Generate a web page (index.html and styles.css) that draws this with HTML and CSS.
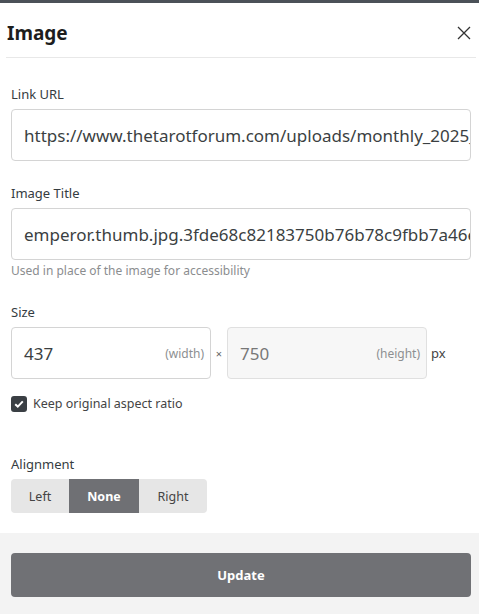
FILE: index.html
```html
<!DOCTYPE html>
<html>
<head>
<meta charset="utf-8">
<link rel="stylesheet" href="styles.css">
</head>
<body>
<div class="topbar"></div>
<div class="header">
  <h1 class="title">Image</h1>
  <svg class="close" width="14" height="14" viewBox="0 0 14 14"><path d="M1 1L13 13M13 1L1 13" stroke="#333" stroke-width="1.3" fill="none"/></svg>
</div>
<div class="content">
  <div class="field first">
    <label class="label">Link URL</label>
    <div class="input"><span class="value">https://www.thetarotforum.com/uploads/monthly_2025_01/emperor.jpg</span></div>
  </div>
  <div class="field">
    <label class="label">Image Title</label>
    <div class="input"><span class="value">emperor.thumb.jpg.3fde68c82183750b76b78c9fbb7a46e1.jpg</span></div>
    <div class="hint">Used in place of the image for accessibility</div>
  </div>
  <div class="field size-field">
    <label class="label">Size</label>
    <div class="size-row">
      <div class="input small"><span class="value">437</span><span class="unit">(width)</span></div>
      <span class="times">×</span>
      <div class="input small disabled"><span class="value">750</span><span class="unit">(height)</span></div>
      <span class="px">px</span>
    </div>
    <div class="check-row">
      <span class="checkbox"><svg width="10" height="8" viewBox="0 0 10 8"><path d="M1.2 4.2L3.8 6.6L8.8 1.4" stroke="#fff" stroke-width="2" fill="none"/></svg></span>
      <span class="check-label">Keep original aspect ratio</span>
    </div>
  </div>
  <div class="field align-field">
    <label class="label">Alignment</label>
    <div class="seg">
      <span class="seg-btn left">Left</span>
      <span class="seg-btn none active">None</span>
      <span class="seg-btn right">Right</span>
    </div>
  </div>
</div>
<div class="footer">
  <div class="update">Update</div>
</div>
</body>
</html>
```
FILE: styles.css
```css
* { box-sizing: border-box; }
html, body { margin: 0; padding: 0; background: #fff; }
body {
  font-family: "Noto Sans", "Open Sans", "Liberation Sans", sans-serif;
  color: #353c41;
  width: 479px;
  height: 614px;
  overflow: hidden;
  display: flex;
  flex-direction: column;
}
.topbar { height: 3px; background: #4b5158; flex: none; }
.header {
  height: 55px;
  margin: 0 3px 0 6px;
  border-bottom: 1px solid #e8e8e8;
  display: flex;
  align-items: center;
  justify-content: space-between;
  padding: 6px 5px 0 1px;
  flex: none;
}
.title {
  margin: 0;
  font-size: 19px;
  font-weight: 700;
  color: #1d1d1d;
  line-height: 24px;
}
.close { display: block; }
.content { padding: 0 8px 0 11px; flex: 1; }
.field { margin-top: 23px; }
.field.first { margin-top: 27px; }
.field.size-field { margin-top: 24px; }
.field.align-field { margin-top: 43px; }
.label {
  display: block;
  font-size: 13px;
  line-height: 18px;
  color: #353c41;
  margin-bottom: 6px;
}
.input {
  height: 52px;
  border: 1px solid #d4d4d4;
  border-radius: 4px;
  background: #fff;
  display: flex;
  align-items: center;
  padding: 0 0 0 12px;
  overflow: hidden;
  white-space: nowrap;
}
.value {
  font-size: 17px;
  color: #3b3f42;
}
.hint {
  font-size: 12px;
  line-height: 16px;
  color: #8b8d8f;
  margin-top: 3px;
}
.size-row { display: flex; align-items: center; }
.input.small {
  width: 200px;
  justify-content: space-between;
  padding-right: 6px;
  flex: none;
}
.input.disabled { background: #f7f7f7; border-color: #e0e0e0; }
.input.disabled .value { color: #777; }
.unit { font-size: 12px; color: #8d8f91; }
.times { width: 16px; text-align: center; font-size: 11px; color: #666; }
.px { margin-left: 4px; font-size: 13px; color: #444; }
.check-row { display: flex; align-items: center; margin-top: 17px; }
.checkbox {
  width: 16px;
  height: 16px;
  border-radius: 3px;
  background: #3a3f44;
  display: flex;
  align-items: center;
  justify-content: center;
  flex: none;
}
.check-label { margin-left: 6px; font-size: 12.5px; color: #444; line-height: 16px; }
.seg {
  display: inline-flex;
  height: 34px;
  border-radius: 4px;
  overflow: hidden;
  background: #e6e6e6;
}
.seg-btn {
  display: flex;
  align-items: center;
  justify-content: center;
  font-size: 12.5px;
  color: #444;
}
.seg-btn.left { width: 58px; }
.seg-btn.none { width: 70px; }
.seg-btn.right { width: 68px; }
.seg-btn.active { background: #6f7074; color: #fff; font-weight: 700; }
.footer {
  flex: none;
  height: 81px;
  background: #f3f3f3;
  padding: 20px 8px 0 11px;
}
.update {
  height: 44px;
  border-radius: 4px;
  background: #707175;
  color: #fff;
  font-weight: 700;
  font-size: 13px;
  display: flex;
  align-items: center;
  justify-content: center;
}
```
